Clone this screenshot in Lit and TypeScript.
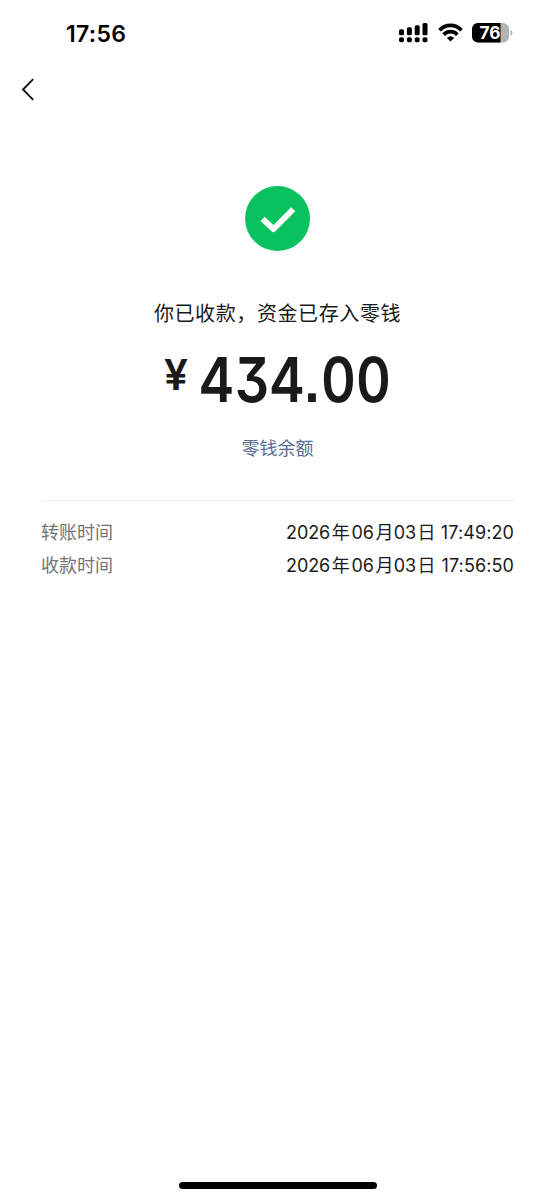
import { LitElement, html, css, svg } from "lit";
import { customElement } from "lit/decorators.js";

const rows = [
  { label: "转账时间", date: ["2026", "06", "03"], time: "17:49:20" },
  { label: "收款时间", date: ["2026", "06", "03"], time: "17:56:50" },
];

const bars = [
  { x: 0, y: 6.2 },
  { x: 7.9, y: 4.2 },
  { x: 15.7, y: 2.3 },
  { x: 23.5, y: 0 },
];

@customElement("status-bar")
class StatusBar extends LitElement {
  static styles = css`
    :host {
      display: flex;
      justify-content: space-between;
      height: 67px;
      box-sizing: border-box;
      padding: 22px 42px 0 66px;
      color: #000;
    }
    .clock {
      font: 600 23px/24px Inter, sans-serif;
      letter-spacing: 0.3px;
    }
    .icons {
      display: flex;
      align-items: flex-start;
    }
    svg {
      display: block;
    }
    .signal {
      margin: 1px 9px 0 0;
    }
    .wifi {
      margin: 1px 9px 0 0;
    }
    .pct {
      font: 700 18px Inter, sans-serif;
    }
  `;
  render() {
    return html`
      <span class="clock">17:56</span>
      <div class="icons">
        <svg class="signal" width="30" height="20" viewBox="0 0 30 20">
          ${bars.map(
            (b) => svg`<rect x=${b.x} y=${b.y} width="5" height=${12.2 - b.y} rx="1.5"></rect>
              <rect x=${b.x} y="14.2" width="5" height="5" rx="1.8"></rect>`
          )}
        </svg>
        <svg class="wifi" width="25" height="20" viewBox="0 0 25 20" fill="none" stroke="#000" stroke-width="3.7">
          <path d="M1.5 7.2C7.7 .8 17.3 .8 23.5 7.2"></path>
          <path d="M5.6 11.6C9.6 7.7 15.4 7.7 19.4 11.6"></path>
          <path d="M8.9 14.9Q12.5 11.6 16.1 14.9L12.5 18.6Z" fill="#000" stroke="none"></path>
        </svg>
        <svg width="41" height="21" viewBox="0 0 41 21">
          <defs><clipPath id="cell"><rect x="0" y="1" width="37" height="19.5" rx="6"></rect></clipPath></defs>
          <g clip-path="url(#cell)">
            <rect width="41" height="21" fill="#b3b3b3"></rect>
            <rect width="28.5" height="21"></rect>
          </g>
          <path d="M38.5 7.7Q40.5 8.5 40.5 10.8T38.5 13.8Z" fill="#b3b3b3"></path>
          <text class="pct" x="7.5" y="17.2" fill="#fff" textLength="21" lengthAdjust="spacingAndGlyphs">76</text>
        </svg>
      </div>
    `;
  }
}

@customElement("app-root")
class AppRoot extends LitElement {
  static styles = css`
    :host {
      display: flex;
      flex-direction: column;
      height: 1200px;
      background: #fff;
      color: #1a1a1a;
      font-family: Inter, "Noto Sans CJK SC", sans-serif;
    }
    svg {
      display: block;
    }
    .nav {
      height: 44px;
      padding: 0 20px;
      display: flex;
      align-items: center;
    }
    .result {
      display: flex;
      flex-direction: column;
      align-items: center;
      padding-top: 75px;
    }
    .message {
      margin-top: 47px;
      font: 400 20px/30px "Noto Sans CJK SC", sans-serif;
      letter-spacing: 0.6px;
    }
    .amount {
      margin-top: 12px;
      font-family: Inter, sans-serif;
      font-weight: 600;
      fill: #1a1a1a;
    }
    .yen {
      font-size: 43px;
    }
    .digits {
      font-size: 62px;
      font-feature-settings: "cv09", "tnum", "ss07";
    }
    .link {
      margin-top: 14px;
      font: 400 18px/27px "Noto Sans CJK SC", sans-serif;
      color: #576b95;
    }
    .details {
      margin: 39px 41px 0;
      border-top: 1px solid #ededed;
      padding-top: 16px;
    }
    .row {
      display: flex;
      justify-content: space-between;
      line-height: 32.5px;
      font-size: 18px;
    }
    .label {
      color: #737373;
      font-family: "Noto Sans CJK SC", sans-serif;
      margin-top: -2px;
    }
    .value {
      display: flex;
      letter-spacing: -0.1px;
    }
    .unit {
      margin: -2px 0 0 1.5px;
      font-family: "Noto Sans CJK SC", sans-serif;
    }
    .month {
      margin-left: 2px;
    }
    .day {
      margin-left: 0.5px;
    }
    .time {
      width: 74.5px;
      margin-left: 4px;
      text-align: right;
      letter-spacing: 0.1px;
    }
    .home {
      width: 198px;
      height: 7px;
      border-radius: 4px;
      background: #000;
      margin: auto auto 11px;
    }
  `;
  render() {
    return html`
      <status-bar></status-bar>
      <div class="nav">
        <svg width="16" height="24" viewBox="0 0 16 24" fill="none" stroke="#111" stroke-width="1.9">
          <path d="M13.2 2.2L3 12.5L13.2 22.8"></path>
        </svg>
      </div>
      <div class="result">
        <svg width="65" height="65" viewBox="0 0 65 65">
          <circle cx="32.5" cy="32.5" r="32.5" fill="#0ac160"></circle>
          <path d="M17.6 32.8L28.4 43.2L48.2 23.2" fill="none" stroke="#fff" stroke-width="5.8" stroke-linejoin="round"></path>
        </svg>
        <div class="message">你已收款，资金已存入零钱</div>
        <svg class="amount" width="240" height="80" viewBox="0 0 240 80">
          <text class="yen" x="6" y="50" textLength="24" lengthAdjust="spacingAndGlyphs">¥</text>
          <text class="digits" transform="translate(41 62.3) scale(.87 1)" x="0 41.4 81 121.5 140.3 180.5">434.00</text>
        </svg>
        <div class="link">零钱余额</div>
      </div>
      <div class="details">
        ${rows.map(
          (r) => html`<div class="row">
            <span class="label">${r.label}</span>
            <span class="value">
              <span>${r.date[0]}</span><span class="unit">年</span>
              <span class="month">${r.date[1]}</span><span class="unit">月</span>
              <span class="day">${r.date[2]}</span><span class="unit">日</span>
              <span class="time">${r.time}</span>
            </span>
          </div>`
        )}
      </div>
      <div class="home"></div>
    `;
  }
}
